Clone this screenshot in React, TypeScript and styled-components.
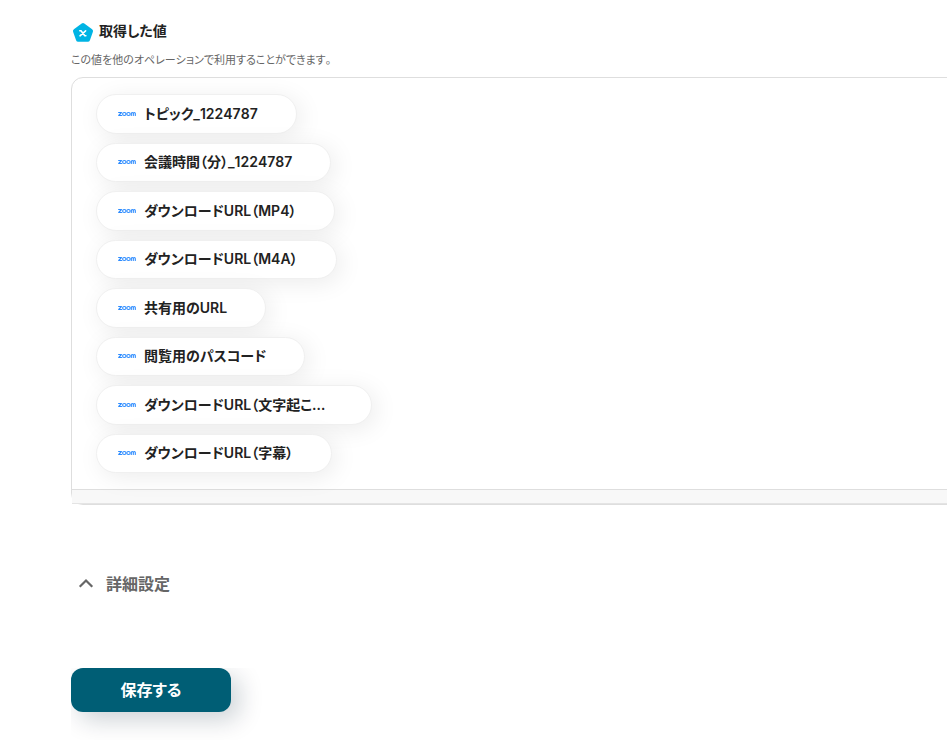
import React from "react";
import styled, { createGlobalStyle } from "styled-components";

const GlobalStyle = createGlobalStyle`
  * { box-sizing: border-box; }
  body {
    margin: 0;
    overflow-x: hidden;
    background: #fff;
    color: #222;
    font-family: Inter, "Noto Sans CJK JP", sans-serif;
    font-feature-settings: "palt";
    font-kerning: none;
  }
  button { font: inherit; font-feature-settings: inherit; cursor: pointer; }
`;

const Page = styled.main`
  padding: 19px 0 36px 71px;
`;

const Header = styled.header`
  display: flex;
  align-items: center;
  height: 24px;
  gap: 4px;

  svg { margin-top: 3px; }
`;

const Title = styled.h2`
  margin: 0;
  font-size: 14px;
  line-height: 22px;
  font-weight: 600;
`;

const Description = styled.p`
  margin: 8px 0;
  font-size: 11px;
  line-height: 18px;
  color: #666;
`;

const Panel = styled.section`
  margin-right: -24px;
  border: 1px solid #dedede;
  border-radius: 12px;
`;

const OutputList = styled.ul`
  display: grid;
  grid-auto-rows: 1fr;
  justify-items: start;
  gap: 9px;
  height: 411px;
  margin: 0;
  padding: 16px 24px;
  list-style: none;
`;

const Chip = styled.li`
  display: flex;
  align-items: center;
  gap: 8px;
  padding: 0 38px 0 21px;
  border: 1px solid #f0f0f0;
  border-radius: 20px;
  background: #fff;
  box-shadow: 4px 4px 24px rgba(0, 0, 0, 0.08);
`;

const ChipLabel = styled.span<{ $wide: boolean }>`
  min-width: ${({ $wide }) => ($wide ? "189px" : "0")};
  white-space: nowrap;
  font-size: 14px;
  line-height: 22px;
  font-weight: 600;
`;

const PanelFooter = styled.div`
  height: 15px;
  border-top: 1px solid #dedede;
  border-bottom: 1px solid #e4e4e4;
  background: #f8f8f8;
`;

const DetailsToggle = styled.button`
  display: flex;
  align-items: center;
  gap: 12px;
  margin: 65px 0 0;
  padding: 0 7px;
  height: 26px;
  border: 0;
  background: none;

  && {
    color: #666;
    font-size: 16px;
    font-weight: 600;
  }
`;

const ButtonArea = styled.div`
  margin-top: 72px;
  padding: 0 36px 28px 0;
  overflow: hidden;
`;

const SaveButton = styled.button`
  display: block;
  width: 160px;
  height: 44px;
  padding: 0 0 2px;
  border: 0;
  border-radius: 12px;
  background: #005e75;
  box-shadow: 8px 8px 24px rgba(0, 30, 50, 0.2);

  && {
    color: #fff;
    font-size: 16px;
    font-weight: 600;
  }
`;

function ValueIcon() {
  return (
    <svg width="24" height="24" viewBox="0 0 24 24" aria-hidden="true">
      <path
        d="M12 4.4 19.8 10 16.8 18.6H7.2L4.2 10Z"
        fill="#00b4e4"
        stroke="#00b4e4"
        strokeWidth="4.5"
        strokeLinejoin="round"
      />
      <path
        d="M8.8 9.8h1.2l3.8 5h1.1M14.6 9.8 9 14.8"
        fill="none"
        stroke="#fff"
        strokeWidth="1.6"
        strokeLinecap="round"
        strokeLinejoin="round"
      />
    </svg>
  );
}

function ZoomLogo() {
  return (
    <svg width="18" height="6" viewBox="0 0 18 6" role="img" aria-label="zoom">
      <g
        fill="none"
        stroke="#2d8cff"
        strokeWidth="1.1"
        strokeLinecap="round"
        strokeLinejoin="round"
      >
        <path d="M.6 1.5H3.5L.7 4.5H3.7" />
        <ellipse cx="6.3" cy="3" rx="1.7" ry="1.5" />
        <ellipse cx="10.5" cy="3" rx="1.7" ry="1.5" />
        <path d="M13.3 4.5V2.5c0-1.3 2-1.3 2 0V4.5M15.3 2.5c0-1.3 2-1.3 2 0V4.5" />
      </g>
    </svg>
  );
}

function Chevron() {
  return (
    <svg width="16" height="16" viewBox="0 0 16 16" aria-hidden="true">
      <path
        d="M2.5 11 8 5.5 13.5 11"
        fill="none"
        stroke="#666"
        strokeWidth="2.2"
        strokeLinecap="square"
      />
    </svg>
  );
}

const outputs = [
  "トピック_1224787",
  "会議時間（分）_1224787",
  "ダウンロードURL（MP4）",
  "ダウンロードURL（M4A）",
  "共有用のURL",
  "閲覧用のパスコード",
  "ダウンロードURL（文字起こ…",
  "ダウンロードURL（字幕）",
];

export default function App() {
  return (
    <Page lang="ja">
      <GlobalStyle />
      <Header>
        <ValueIcon />
        <Title>取得した値</Title>
      </Header>
      <Description>この値を他のオペレーションで利用することができます。</Description>
      <Panel>
        <OutputList>
          {outputs.map((name) => (
            <Chip key={name}>
              <ZoomLogo />
              <ChipLabel $wide={name.endsWith("…")}>{name}</ChipLabel>
            </Chip>
          ))}
        </OutputList>
        <PanelFooter />
      </Panel>
      <DetailsToggle type="button" aria-expanded="false">
        <Chevron />
        詳細設定
      </DetailsToggle>
      <ButtonArea>
        <SaveButton type="button">保存する</SaveButton>
      </ButtonArea>
    </Page>
  );
}
